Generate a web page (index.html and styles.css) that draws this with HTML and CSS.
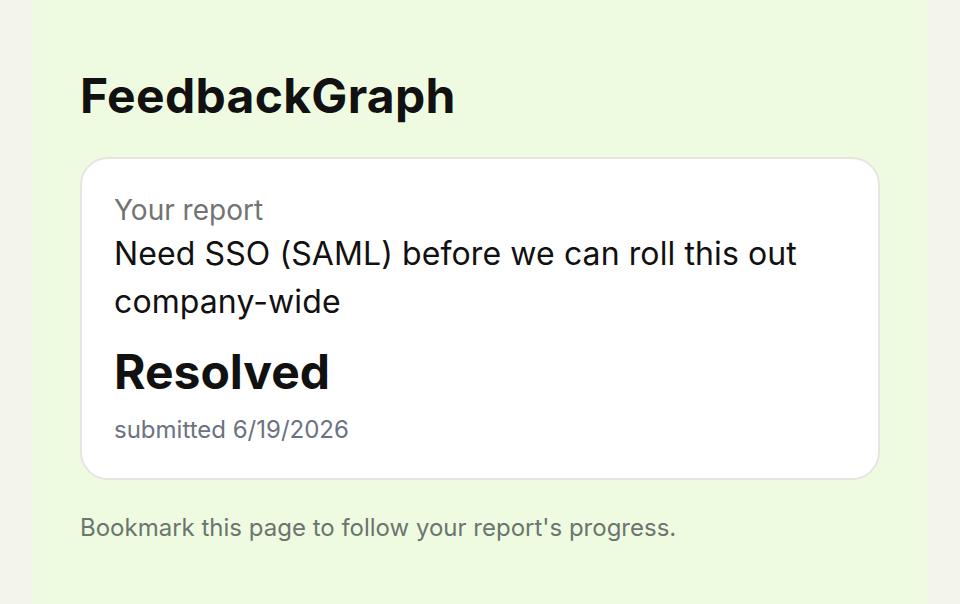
FILE: index.html
```html
<!DOCTYPE html>
<html lang="en">
<head>
<meta charset="utf-8">
<title>FeedbackGraph</title>
<link rel="stylesheet" href="styles.css">
</head>
<body>
<main class="panel">
  <h1 class="brand">FeedbackGraph</h1>
  <section class="card">
    <div class="label">Your report</div>
    <p class="report">Need SSO (SAML) before we can roll this out company-wide</p>
    <div class="status">Resolved</div>
    <div class="meta">submitted 6/19/2026</div>
  </section>
  <p class="hint">Bookmark this page to follow your report's progress.</p>
</main>
</body>
</html>
```

FILE: styles.css
```css
html, body {
  margin: 0;
  height: 100%;
}
body {
  background: #f3f5ec;
  font-family: Inter, "Liberation Sans", sans-serif;
  color: #111;
}
.panel {
  width: 896px;
  margin: 0 auto;
  min-height: 100%;
  box-sizing: border-box;
  background: #effbe0;
  padding: 67px 48px 48px;
}
.brand {
  margin: 0 0 32px;
  font-size: 48px;
  line-height: 58px;
  font-weight: 700;
  letter-spacing: 0.3px;
  color: #111;
}
.card {
  background: #fff;
  border: 2px solid #e4e6df;
  border-radius: 28px;
  padding: 31px 32px 30px;
}
.label {
  font-size: 28px;
  line-height: 40px;
  color: #737373;
}
.report {
  margin: 0;
  font-size: 32px;
  line-height: 48px;
  color: #111;
  letter-spacing: 0.1px;
}
.status {
  margin-top: 18px;
  font-size: 48px;
  line-height: 56px;
  font-weight: 700;
  color: #111;
}
.meta {
  margin-top: 12px;
  font-size: 24px;
  line-height: 36px;
  color: #6b7280;
}
.hint {
  margin: 28px 0 0;
  font-size: 24px;
  line-height: 39px;
  color: #6b7570;
}
```
